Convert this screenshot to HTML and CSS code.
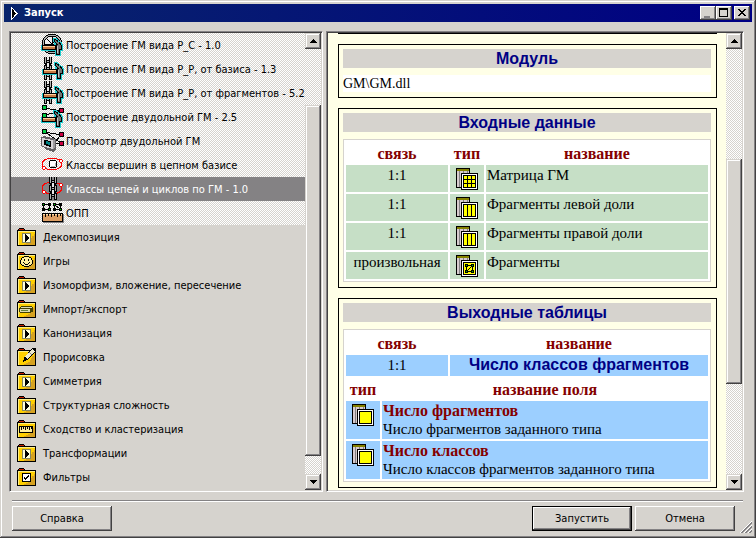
FILE: index.html
```html
<!DOCTYPE html>
<html lang="ru">
<head>
    <meta charset="UTF-8">
    <meta name="viewport" content="width=device-width, initial-scale=1.0">
    <title>Запуск</title>
    <link rel="stylesheet" href="styles.css">
</head>
<body>
    <!-- icon set -->
    <svg class="sprite">
        <symbol id="hammer" viewBox="0 0 24 24">
            <path d="M0 12H13V10L12 9V5H15L19 8V9H21L22 12V18H20V23H14V18H0Z" fill="#21cbce"/>
            <path d="M13 6H15V7H17V9H19V10H20V12H21V17H19V22H15V17H1V12H15V10H14V9H13Z" fill="#000"/>
            <path d="M2 13H14V14H2Z" fill="#ffcf9c"/>
            <path d="M2 14H14V16H2Z" fill="#c67942"/>
            <path d="M14 7H15V8H16V9H18V11H19V12H20V16H18V21H16V12H17V11H16V10H15V9H14Z" fill="#737573"/>
            <path d="M16 13H17V20H16Z" fill="#c6c7c6"/>
        </symbol>
        <symbol id="chain" viewBox="0 0 8 24">
            <path d="M0 0H3V3H5V0H8V7H7V8H8V15H7V16H8V23H5V20H3V23H0V16H1V15H0V8H1V7H0Z" fill="#000"/>
            <path d="M1 0H2V6H1ZM6 0H7V6H6ZM1 9H2V14H1ZM6 9H7V14H6ZM1 17H2V22H1ZM6 17H7V22H6ZM3 4H5V5H3ZM3 11H5V12H3ZM3 18H5V19H3Z" fill="#b5b6b5"/>
            <path d="M3 6H5V10H3ZM3 13H5V17H3Z" fill="#e7e7e7"/>
        </symbol>
        <symbol id="wheel-hammer" viewBox="0 0 24 24">
            <circle cx="11" cy="11" r="9" fill="#efefef" stroke="#000" stroke-width="3"/>
            <circle cx="11" cy="11" r="9" fill="none" stroke="#b5b6b5"/>
            <path d="M11 3V11L5 5M11 11L17 5M3 11H19" fill="none" stroke="#000"/>
            <use href="#hammer"/>
        </symbol>
        <symbol id="chain-hammer" viewBox="0 0 24 24">
            <use href="#chain" x="3" y="0" width="8" height="24"/>
            <use href="#hammer" x="1"/>
        </symbol>
        <symbol id="graph-hammer" viewBox="0 0 24 24">
            <path d="M4 3L20 6L4 10" fill="none" stroke="#000" stroke-width="1"/>
            <path d="M1 0H6V5H1ZM1 8H6V13H1ZM18 3H23V8H18Z" fill="#000"/>
            <path d="M2 1H5V4H2ZM2 9H5V12H2Z" fill="#00cf42"/>
            <use href="#hammer"/>
            <path d="M18 3H23V8H18Z" fill="#000"/>
            <path d="M19 4H22V7H19Z" fill="#ce0042"/>
        </symbol>
        <symbol id="graph-view" viewBox="0 0 24 24">
            <path d="M4 3L20 6M4 3L20 14M13 14L20 6M13 14H20" fill="none" stroke="#000"/>
            <path d="M1 0H6V5H1ZM18 3H23V8H18ZM18 12H23V17H18Z" fill="#000"/>
            <path d="M2 1H5V4H2Z" fill="#00cf42"/>
            <path d="M19 4H22V7H19ZM19 13H22V16H19Z" fill="#ce0042"/>
            <path d="M0 8L3 7L15 10V20L12 23L4 20V19L0 17Z" fill="#636163"/>
            <path d="M1 9L12 11V20L1 17Z" fill="#d6d3d6"/>
            <path d="M12 11L14 10V18L12 20Z" fill="#9c9a9c"/>
            <path d="M3 11L10 12V18L3 16Z" fill="#000"/>
            <path d="M5 12L9 13V16L5 15Z" fill="#008284"/>
        </symbol>
        <symbol id="orbit" viewBox="0 0 24 24">
            <ellipse cx="11" cy="11" rx="10" ry="6" fill="none" stroke="#f00"/>
            <path d="M2 13H4V14H5V16H4V17H2V16H1V14H2ZM19 6H21V7H22V9H21V10H19V9H18V7H19Z" fill="#f00"/>
            <path d="M2 14H4V16H2ZM19 7H21V9H19Z" fill="#fff"/>
        </symbol>
        <symbol id="orbit-node" viewBox="0 0 24 24">
            <use href="#orbit"/>
            <circle cx="12" cy="11" r="4" fill="#fff" stroke="#000"/>
            <path d="M10 13H14V14H10ZM14 10H15V13H14Z" fill="#b5b6b5"/>
        </symbol>
        <symbol id="orbit-chain" viewBox="0 0 24 24">
            <use href="#orbit"/>
            <use href="#chain" x="8" y="0" width="8" height="24"/>
            <path d="M5 16L8 17M16 17L20 14" fill="none" stroke="#f00"/>
        </symbol>
        <symbol id="ruler" viewBox="0 0 24 24">
            <path d="M2.500 3.500H8.500V8.500H2.500ZM13.500 3.500H19.500V8.500H13.500ZM13.500 3.500L19.500 8.500" fill="none" stroke="#000"/>
            <path d="M1 2H4V5H1ZM7 2H10V5H7ZM1 7H4V10H1ZM7 7H10V10H7ZM12 2H15V5H12ZM18 2H21V5H18ZM12 7H15V10H12ZM18 7H21V10H18Z" fill="#000"/>
            <path d="M2 3H3V4H2ZM8 8H9V9H8ZM13 3H14V4H13ZM19 8H20V9H19Z" fill="#0c0"/>
            <path d="M2 13H23V22H2Z" fill="#848284"/>
            <path d="M1 12H22V21H1Z" fill="#000"/>
            <path d="M2 13H21V20H2Z" fill="#de9e63"/>
            <path d="M2 13H21V14H2Z" fill="#ffdbad"/>
            <path d="M4 13H5V16H4ZM7 13H8V15H7ZM10 13H11V16H10ZM13 13H14V15H13ZM16 13H17V16H16ZM19 13H20V15H19Z" fill="#000"/>
        </symbol>

        <symbol id="folder" viewBox="0 0 19 18">
            <path d="M2 0H7V1H8V2H19V18H0V2H1V1H2Z" fill="#000"/>
            <path d="M2 1H7V2H2Z" fill="#c62000"/>
            <path d="M1 3H18V17H1Z" fill="#ffcf00"/>
            <path d="M1 3H18V4H2V17H1Z" fill="#ffef84"/>
            <path d="M17 6H18V17H7V16H9V15H11V14H13V12H14V10H15V8H17Z" fill="#d6a221"/>
        </symbol>
        <symbol id="folder-play" viewBox="0 0 19 18">
            <use href="#folder"/>
            <path d="M5 5H14V15H5Z" fill="#848663"/>
            <path d="M6 6H13V14H6Z" fill="#ffffde"/>
            <path d="M8 6H9V7H10V8H11V9H12V11H11V12H10V13H9V14H8Z" fill="#000"/>
        </symbol>
        <symbol id="folder-smile" viewBox="0 0 19 18">
            <use href="#folder"/>
            <path d="M7 4H12V5H14V6H15V8H16V12H15V13H14V14H12V15H7V14H5V13H4V12H3V8H4V6H5V5H7Z" fill="#000"/>
            <path d="M7 5H12V6H14V8H15V12H14V13H12V14H7V13H5V12H4V8H5V6H7Z" fill="#ffef9c"/>
            <path d="M7 7H8V9H7ZM11 7H12V9H11ZM6 10H7V11H8V12H11V11H12V10H13V11H12V12H11V13H8V12H7V11H6Z" fill="#000"/>
        </symbol>
        <symbol id="folder-disk" viewBox="0 0 19 18">
            <use href="#folder"/>
            <path d="M4 6H15V7H16V12H14V13H3V12H2V8H3V7H4Z" fill="#424100"/>
            <path d="M4 7H15V8H4ZM3 9H13V12H3Z" fill="#dedbb5"/>
            <path d="M4 10H11V11H4Z" fill="#63823a"/>
        </symbol>
        <symbol id="folder-pencil" viewBox="0 0 19 18">
            <use href="#folder"/>
            <path d="M15 0H19V4L10 12L6 14L7 10Z" fill="#000"/>
            <path d="M15 1L18 3L10 11L8 9Z" fill="#efebce"/>
            <path d="M12 4L15 7" stroke="#848284"/>
        </symbol>
        <symbol id="folder-ruler" viewBox="0 0 19 18">
            <use href="#folder"/>
            <path d="M2 6H16V13H2Z" fill="#000"/>
            <path d="M3 7H15V12H3Z" fill="#ffef9c"/>
            <path d="M4 7H5V10H4ZM6 7H7V9H6ZM8 7H9V10H8ZM10 7H11V9H10ZM12 7H13V10H12ZM14 7H15V9H14Z" fill="#000"/>
        </symbol>
        <symbol id="folder-check" viewBox="0 0 19 18">
            <use href="#folder"/>
            <path d="M5 5H14V14H5Z" fill="#000"/>
            <path d="M6 6H13V13H6Z" fill="#fff"/>
            <path d="M7 9H8V10H9V9H10V8H11V7H12V9H11V10H10V11H9V12H8V11H7Z" fill="#000"/>
        </symbol>

        <symbol id="sheet" viewBox="0 0 22 22">
            <path d="M0 0H14V20H0Z" fill="#000"/>
            <path d="M1 1H13V3H1Z" fill="#848200"/>
            <path d="M1 3H13V19H1Z" fill="#d6cbce"/>
            <path d="M3 3H4V19H3ZM7 3H8V19H7ZM11 3H12V19H11Z" fill="#848284"/>
            <path d="M5 5H22V22H5Z" fill="#000"/>
            <path d="M6 6H21V21H6Z" fill="#fff"/>
            <path d="M7 7H20V20H7Z" fill="#000"/>
            <path d="M8 8H19V19H8Z" fill="#ff0"/>
        </symbol>
        <symbol id="sheet-columns" viewBox="0 0 22 22">
            <use href="#sheet"/>
            <path d="M11 8H12V19H11ZM15 8H16V19H15Z" fill="#000"/>
        </symbol>
        <symbol id="sheet-grid" viewBox="0 0 22 22">
            <use href="#sheet-columns"/>
            <path d="M8 11H19V12H8ZM8 15H19V16H8Z" fill="#000"/>
        </symbol>
        <symbol id="sheet-graph" viewBox="0 0 22 22">
            <use href="#sheet"/>
            <path d="M10.500 10.500H16.500L10.500 16.500H16.500M10.500 10.500V16.500M16.500 10.500V16.500" fill="none" stroke="#000"/>
            <path d="M9 9H12V12H9ZM15 9H18V12H15ZM9 15H12V18H9ZM15 15H18V18H15Z" fill="#000"/>
            <path d="M10 10H11V11H10ZM16 10H17V11H16ZM10 16H11V17H10ZM16 16H17V17H16Z" fill="#0c0"/>
        </symbol>
    </svg>

    <div class="window">
        <header class="titlebar">
            <svg class="title-icon" width="7" height="13" viewBox="0 0 7 13">
                <path d="M0.500 0.500L6 6.500L0.500 12.500Z" fill="#000" stroke="#fff"/>
            </svg>
            <h1>Запуск</h1>
            <button class="caption-button" aria-label="Свернуть">
                <svg width="12" height="10"><path d="M2 8H8V10H2Z" fill="#848284"/></svg>
            </button>
            <button class="caption-button" aria-label="Развернуть">
                <svg width="12" height="10"><path d="M1 0H10V9H1ZM2 2V8H9V2Z" fill="#000" fill-rule="evenodd"/></svg>
            </button>
            <button class="caption-button close" aria-label="Закрыть">
                <svg width="12" height="10"><path d="M2 1H4V2H5V3H7V2H8V1H10V2H9V3H8V4H7V5H8V6H9V7H10V8H8V7H7V6H5V7H4V8H2V7H3V6H4V5H5V4H4V3H3V2H2Z" fill="#000"/></svg>
            </button>
        </header>

        <main class="panels">
            <section class="panel tree-panel">
                <div class="tree">
                    <ul class="items">
                        <li><svg><use href="#wheel-hammer"/></svg>Построение ГМ вида P_C - 1.0</li>
                        <li><svg><use href="#chain-hammer"/></svg>Построение ГМ вида P_P, от базиса - 1.3</li>
                        <li><svg><use href="#chain-hammer"/></svg>Построение ГМ вида P_P, от фрагментов - 5.2</li>
                        <li><svg><use href="#graph-hammer"/></svg>Построение двудольной ГМ - 2.5</li>
                        <li><svg><use href="#graph-view"/></svg>Просмотр двудольной ГМ</li>
                        <li><svg><use href="#orbit-node"/></svg>Классы вершин в цепном базисе</li>
                        <li class="selected"><svg><use href="#orbit-chain"/></svg>Классы цепей и циклов по ГМ - 1.0</li>
                        <li><svg><use href="#ruler"/></svg>ОПП</li>
                    </ul>
                    <ul class="folders">
                        <li><svg><use href="#folder-play"/></svg>Декомпозиция</li>
                        <li><svg><use href="#folder-smile"/></svg>Игры</li>
                        <li><svg><use href="#folder-play"/></svg>Изоморфизм, вложение, пересечение</li>
                        <li><svg><use href="#folder-disk"/></svg>Импорт/экспорт</li>
                        <li><svg><use href="#folder-play"/></svg>Канонизация</li>
                        <li><svg><use href="#folder-pencil"/></svg>Прорисовка</li>
                        <li><svg><use href="#folder-play"/></svg>Симметрия</li>
                        <li><svg><use href="#folder-play"/></svg>Структурная сложность</li>
                        <li><svg><use href="#folder-ruler"/></svg>Сходство и кластеризация</li>
                        <li><svg><use href="#folder-play"/></svg>Трансформации</li>
                        <li><svg><use href="#folder-check"/></svg>Фильтры</li>
                    </ul>
                </div>
                <div class="scrollbar tree-scroll">
                    <button aria-label="Вверх"><svg width="7" height="4"><path d="M3 0H4V1H5V2H6V3H7V4H0V3H1V2H2V1H3Z"/></svg></button>
                    <div class="before"></div>
                    <div class="thumb"></div>
                    <div class="after"></div>
                    <button aria-label="Вниз"><svg width="7" height="4"><path d="M0 0H7V1H6V2H5V3H4V4H3V3H2V2H1V1H0Z"/></svg></button>
                </div>
            </section>

            <section class="panel info-panel">
                <div class="info">
                    <section class="card">
                        <h2>Модуль</h2>
                        <p class="module">GM\GM.dll</p>
                    </section>

                    <section class="card">
                        <h2>Входные данные</h2>
                        <table class="inputs">
                            <colgroup><col class="col-link"><col class="col-type"><col></colgroup>
                            <tr><th>связь</th><th>тип</th><th>название</th></tr>
                            <tr>
                                <td class="link">1:1</td>
                                <td class="type"><svg><use href="#sheet-grid"/></svg></td>
                                <td>Матрица ГМ</td>
                            </tr>
                            <tr>
                                <td class="link">1:1</td>
                                <td class="type"><svg><use href="#sheet-columns"/></svg></td>
                                <td>Фрагменты левой доли</td>
                            </tr>
                            <tr>
                                <td class="link">1:1</td>
                                <td class="type"><svg><use href="#sheet-columns"/></svg></td>
                                <td>Фрагменты правой доли</td>
                            </tr>
                            <tr>
                                <td class="link">произвольная</td>
                                <td class="type"><svg><use href="#sheet-graph"/></svg></td>
                                <td>Фрагменты</td>
                            </tr>
                        </table>
                    </section>

                    <section class="card">
                        <h2>Выходные таблицы</h2>
                        <table class="outputs">
                            <colgroup><col class="col-type"><col class="col-rest"><col></colgroup>
                            <tr><th colspan="2">связь</th><th>название</th></tr>
                            <tr>
                                <td class="link" colspan="2">1:1</td>
                                <td class="table-name">Число классов фрагментов</td>
                            </tr>
                            <tr><th>тип</th><th colspan="2">название поля</th></tr>
                            <tr>
                                <td class="type"><svg><use href="#sheet"/></svg></td>
                                <td class="field" colspan="2"><strong>Число фрагментов</strong>Число фрагментов заданного типа</td>
                            </tr>
                            <tr>
                                <td class="type"><svg><use href="#sheet"/></svg></td>
                                <td class="field" colspan="2"><strong>Число классов</strong>Число классов фрагментов заданного типа</td>
                            </tr>
                        </table>
                    </section>
                </div>
                <div class="scrollbar info-scroll">
                    <button aria-label="Вверх"><svg width="7" height="4"><path d="M3 0H4V1H5V2H6V3H7V4H0V3H1V2H2V1H3Z"/></svg></button>
                    <div class="before"></div>
                    <div class="thumb"></div>
                    <div class="after"></div>
                    <button aria-label="Вниз"><svg width="7" height="4"><path d="M0 0H7V1H6V2H5V3H4V4H3V3H2V2H1V1H0Z"/></svg></button>
                </div>
            </section>
        </main>

        <footer class="actions">
            <button class="action">Справка</button>
            <button class="action default">Запустить</button>
            <button class="action">Отмена</button>
        </footer>
        <svg class="grip" width="12" height="12" viewBox="0 0 12 12">
            <path d="M0 12L12 0M4 12L12 4M8 12L12 8" stroke="#fff"/>
            <path d="M1 12L12 1M2 12L12 2M5 12L12 5M6 12L12 6M9 12L12 9M10 12L12 10" stroke="#848284"/>
        </svg>
    </div>
</body>
</html>
```
FILE: styles.css
```css
* {
    box-sizing: border-box;
}
body {
    margin: 0;
    background-color: #d6d3ce;
    font-family: "DejaVu Sans Condensed", "DejaVu Sans", sans-serif;
    font-size: 11px;
    color: #000;
}
h1, h2, p, ul {
    margin: 0;
    padding: 0;
}
button {
    font: inherit;
    color: #000;
    background-color: #d6d3ce;
    border: none;
    border-radius: 0;
    padding: 0;
}
svg {
    flex-shrink: 0;
    shape-rendering: crispEdges;
}
.sprite {
    display: none;
}
.window {
    position: relative;
    display: flex;
    flex-direction: column;
    height: 100vh;
    padding: 4px;
    box-shadow: inset -1px -1px #424142, inset 1px 1px #d6d3ce, inset -2px -2px #848284, inset 2px 2px #fff;
}

/* title bar */
.titlebar {
    display: flex;
    align-items: center;
    height: 18px;
    padding: 0 2px 0 7px;
    background: linear-gradient(to right, #08246b, #000084);
    color: #fff;
}
.titlebar h1 {
    flex: 1;
    margin-left: 6px;
    font-size: 11px;
    line-height: 18px;
}
.caption-button {
    display: flex;
    width: 16px;
    height: 14px;
    padding: 2px;
    box-shadow: inset -1px -1px #424142, inset 1px 1px #fff, inset -2px -2px #848284;
}
.caption-button.close {
    margin-left: 2px;
}

/* panels */
.panels {
    flex: 1;
    min-height: 0;
    display: flex;
    gap: 3px;
    margin: 9px 8px 8px 5px;
}
.panel {
    display: flex;
    border: 1px solid;
    border-color: #848284 #fff #fff #848284;
    padding: 1px;
    box-shadow: inset 1px 1px #424142, inset -1px -1px #d6d3ce;
    overflow: hidden;
}
.tree-panel {
    flex: 0 0 314px;
}
.info-panel {
    flex: 1;
    background-color: #ffffe7;
}
.tree, .info {
    flex: 1;
    min-width: 0;
    overflow: hidden;
}
.tree ul {
    list-style: none;
}
.tree li {
    display: flex;
    align-items: flex-start;
    height: 24px;
    line-height: 26px;
    white-space: nowrap;
}
.items, .scrollbar {
    background: repeating-conic-gradient(#d6d3ce 0 25%, #fff 0 50%) 0 0 / 2px 2px;
}
.items li {
    padding-left: 30px;
    gap: 1px;
}
.items svg {
    width: 24px;
    height: 24px;
}
.items .selected {
    background-color: #848284;
    color: #fff;
}
.folders li {
    padding-left: 6px;
    gap: 7px;
}
.folders svg {
    width: 19px;
    height: 18px;
    margin-top: 3px;
}

/* scrollbars */
.scrollbar {
    display: flex;
    flex-direction: column;
    width: 16px;
}
.scrollbar button {
    display: flex;
    align-items: center;
    justify-content: center;
    height: 16px;
}
.scrollbar button, .thumb {
    background-color: #d6d3ce;
    box-shadow: inset -1px -1px #424142, inset 1px 1px #d6d3ce, inset -2px -2px #848284, inset 2px 2px #fff;
}
.tree-scroll .before {
    flex: 56;
}
.tree-scroll .thumb {
    flex: 350;
}
.tree-scroll .after {
    flex: 18;
}
.info-scroll .before {
    flex: 110;
}
.info-scroll .thumb {
    flex: 224;
}
.info-scroll .after {
    flex: 90;
}

/* module description */
.info {
    padding: 0 9px 0 10px;
    font-family: "Liberation Serif", serif;
    font-size: 15px;
    line-height: 18px;
}
.info::before {
    content: "";
    display: block;
    height: 1px;
    background-color: #000;
}
.card {
    margin-top: 10px;
    padding: 4px 5px 5px 4px;
    border: 1px solid #000;
}
.card h2 {
    margin-bottom: 7px;
    background-color: #d6d3ce;
    text-align: center;
    line-height: 19px;
}
.card h2, .table-name {
    font-family: "Liberation Sans", sans-serif;
    font-size: 16px;
    font-weight: bold;
    color: #000084;
}
.module {
    background-color: #fff;
    font-size: 14px;
    line-height: 17px;
}
table {
    width: 100%;
    table-layout: fixed;
    border: 1px solid #d6d3ce;
    border-spacing: 2px;
    background-color: #fff;
}
.col-link {
    width: 102px;
}
.col-type {
    width: 34px;
}
.col-rest {
    width: 66px;
}
th {
    height: 21px;
    padding: 2px 0 0;
    font-size: 16px;
    color: #840000;
}
td {
    height: 27px;
    padding: 1px;
    vertical-align: top;
}
.inputs td {
    background-color: #c6dfc6;
}
.outputs td {
    height: 21px;
    background-color: #9ccfff;
}
.link, .table-name {
    text-align: center;
}
td.type {
    padding: 3px 6px 2px;
}
.type svg {
    display: block;
    width: 22px;
    height: 22px;
}
.outputs .field {
    height: 38px;
}
.field strong {
    display: block;
    font-size: 16px;
    color: #840000;
}

/* bottom buttons */
.actions {
    display: flex;
    gap: 3px;
    margin: 0 9px 0 8px;
    padding: 5px 8px 3px 0;
    border-top: 1px solid #848284;
    box-shadow: inset 0 1px #fff;
}
.action {
    width: 100px;
    height: 25px;
    box-shadow: inset -1px -1px #424142, inset 1px 1px #fff, inset -2px -2px #848284;
}
.action.default {
    margin-left: auto;
    border: 1px solid #000;
}
.grip {
    position: absolute;
    right: 4px;
    bottom: 5px;
}
```
